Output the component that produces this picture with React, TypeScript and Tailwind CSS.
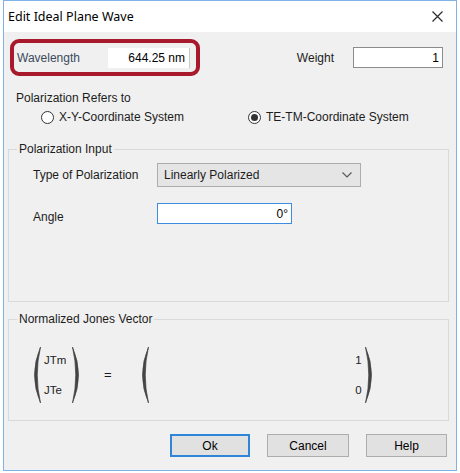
import React from 'react';

const Paren: React.FC<{ right?: boolean }> = ({ right }) => (
  <svg width="13" height="58" viewBox="0 0 13 58" className={right ? '-scale-x-100' : ''}>
    <path d="M11.5 1 Q-0.5 29 11.5 57 Q5 29 11.5 1 Z" fill="#444" stroke="#444" strokeWidth="0.7" />
  </svg>
);

const Radio: React.FC<{ checked?: boolean; label: string }> = ({ checked, label }) => (
  <label className="flex items-center gap-[5px]">
    <span className="w-[13px] h-[13px] rounded-full border border-[#333] bg-white flex items-center justify-center">
      {checked && <span className="w-[7px] h-[7px] rounded-full bg-[#333]" />}
    </span>
    <span>{label}</span>
  </label>
);

const App: React.FC = () => {
  return (
    <div className="w-[460px] h-[473px] bg-white font-['Liberation_Sans',Arial,sans-serif] text-[12px] leading-[14px] text-[#1c1c1c]">
      <div className="ml-[3px] w-[454px] h-[471px] border border-[#7fb3e6] flex flex-col">
        {/* Title bar */}
        <div className="h-[31px] shrink-0 bg-white flex items-center justify-between pl-[4px] pr-[13px]">
          <span className="font-['Noto_Sans',sans-serif] text-[12.5px] text-black">Edit Ideal Plane Wave</span>
          <svg width="11" height="11" viewBox="0 0 11 11">
            <path d="M0.5 0.5 L10.5 10.5 M10.5 0.5 L0.5 10.5" stroke="#2b2b2b" strokeWidth="1.2" />
          </svg>
        </div>

        <div className="flex-1 bg-[#f0f0f0] flex flex-col">
          {/* Wavelength / Weight */}
          <div className="mt-[7px] flex items-center">
            <div className="ml-[6px] w-[190px] h-[37px] border-[4px] border-[#a8192c] rounded-[9px] flex items-center pl-[3px] pr-[6px]">
              <span className="text-[#3a4a5c]">Wavelength</span>
              <div className="ml-auto w-[82px] h-[20px] bg-white border-r border-[#c8c8c8] flex items-center justify-end pr-[4px] text-black">
                644.25 nm
              </div>
            </div>
            <span className="ml-auto">Weight</span>
            <div className="ml-[19px] mr-[13px] w-[90px] h-[21px] bg-white border border-[#8c8c8c] flex items-center justify-end pr-[3px] text-black">
              1
            </div>
          </div>

          <div className="mt-[15px] pl-[12px]">Polarization Refers to</div>
          <div className="mt-[5px] flex items-center pl-[37px]">
            <div className="w-[207px]">
              <Radio label="X-Y-Coordinate System" />
            </div>
            <Radio checked label="TE-TM-Coordinate System" />
          </div>

          {/* Polarization Input */}
          <fieldset className="mt-[18px] ml-[4px] mr-[7px] h-[160px] border border-[#d9d9d9]">
            <legend className="ml-[8px] px-[2px]">Polarization Input</legend>
            <div className="mt-[7px] pl-[24px] flex items-center">
              <span className="w-[124px]">Type of Polarization</span>
              <div className="w-[204px] h-[24px] bg-[#e5e5e5] border border-[#adadad] flex items-center pl-[6px] pr-[8px]">
                <span>Linearly Polarized</span>
                <svg className="ml-auto" width="10" height="6" viewBox="0 0 10 6">
                  <path d="M0.5 0.5 L5 5 L9.5 0.5" fill="none" stroke="#555" strokeWidth="1.1" />
                </svg>
              </div>
            </div>
            <div className="mt-[16px] pl-[24px] flex items-center">
              <span className="w-[124px] pt-[6px]">Angle</span>
              <div className="w-[135px] h-[21px] bg-white border border-[#3c8de0] flex items-center justify-end pr-[3px] text-black">
                0°
              </div>
            </div>
          </fieldset>

          {/* Normalized Jones Vector */}
          <fieldset className="mt-[10px] ml-[4px] mr-[7px] h-[109px] border border-[#d9d9d9]">
            <legend className="ml-[8px] px-[2px]">Normalized Jones Vector</legend>
            <div className="mt-[20px] pl-[20px] flex items-center text-[11.5px]">
              <Paren />
              <div className="ml-[2px] w-[27px] flex flex-col gap-[16px]">
                <span>JTm</span>
                <span>JTe</span>
              </div>
              <Paren right />
              <span className="ml-[20px] text-[13px]">=</span>
              <div className="ml-[25px]">
                <Paren />
              </div>
              <div className="w-[212px] flex flex-col gap-[16px] text-right">
                <span>1</span>
                <span>0</span>
              </div>
              <div className="ml-[2px]">
                <Paren right />
              </div>
            </div>
          </fieldset>

          {/* Buttons */}
          <div className="mt-[13px] flex justify-end gap-[17px] pr-[9px]">
            <button className="w-[80px] h-[23px] bg-[#e1e1e1] border-2 border-[#2f86d8] text-black">Ok</button>
            <button className="w-[82px] h-[23px] bg-[#e1e1e1] border border-[#adadad] text-black">Cancel</button>
            <button className="w-[81px] h-[23px] bg-[#e1e1e1] border border-[#adadad] text-black">Help</button>
          </div>
        </div>
      </div>
    </div>
  );
};

export default App;
